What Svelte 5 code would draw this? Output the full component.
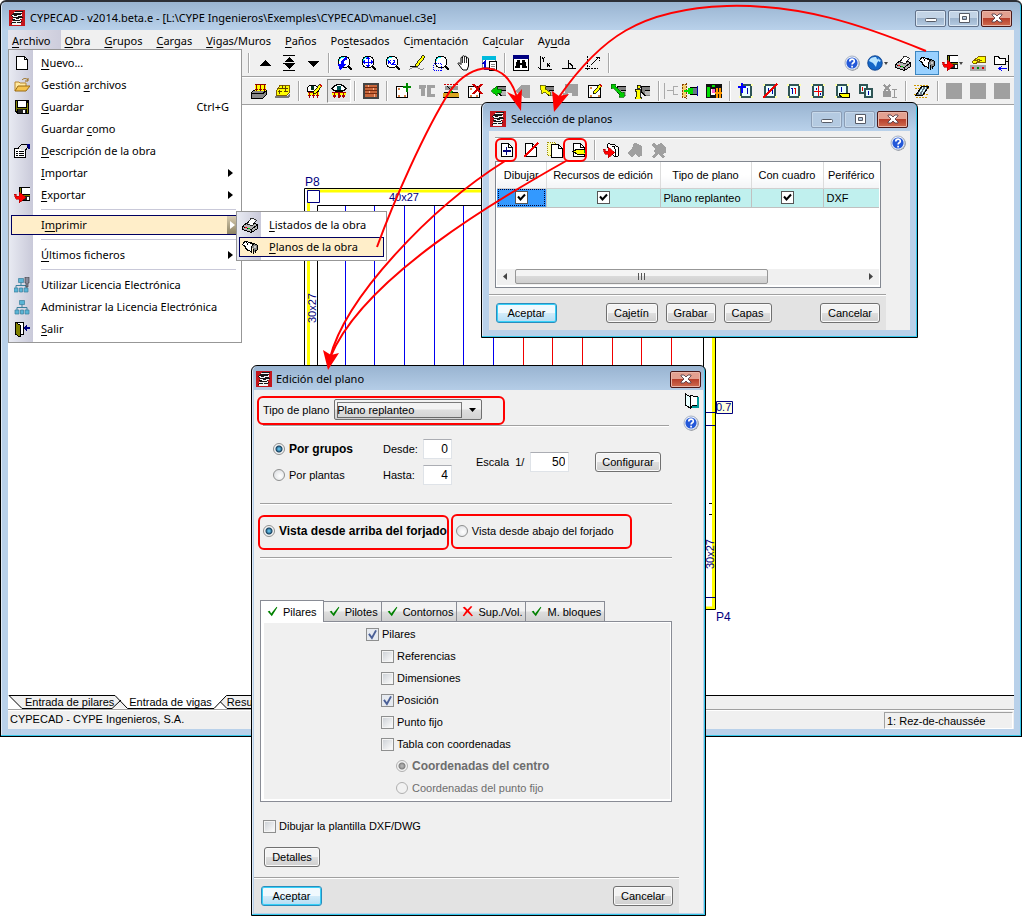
<script>
  const blk = 'stroke="#000" fill="none"';
  const floppy = '<path d="M1 1h14v14H3l-2-2z" fill="#000"/><path d="M4 2h8v6H4z" fill="#fff"/><path d="M2 2h1v10h-1zM13 4h1v10h-1zM3 9h10v1H3z" fill="#808000"/><path d="M4 10h8v4H4z" fill="#222"/><path d="M9 11h2v3H9z" fill="#fff"/>';
  const redArrow = '<path d="M0 7h2v2h3V5l7 5.500-7 5.500v-4H2z" fill="#f00" stroke="#a00" stroke-width=".6"/>';
  const lens = '<path d="M11 11l4 4" stroke="#000" stroke-width="2.500"/><circle cx="7" cy="7" r="6" fill="#fff" stroke="#000"/><path d="M2.500 6a4 4 0 0 1 4-4" stroke="#0ff" fill="none"/>';
  const pencil = '<path d="M13 1l2 2-6 7-3 1 1-3z" fill="#ff0" stroke="#000" stroke-width=".8"/><path d="M13 1l2 2-1 1-2-2z" fill="#c00"/>';
  const column = (inner) => `<path d="M2 1h12v14H2z" fill="#2f5555"/><path d="M4 3h8v10H4z" fill="#e8ffff"/><path d="M1 1h2v2H1zM13 1h2v2h-2zM1 13h2v2H1zM13 13h2v2h-2z" fill="#ffa"/>${inner}`;
  const beam = '<path d="M6 3h9v10H10L6 9z" fill="#808080"/><path d="M6 3.500h9M6.500 3v6l4 4M10 7.500h5" stroke="#000" fill="none"/><path d="M10 8h5v4h-5z" fill="#b8b8b8"/>';
  const nodes = '<path d="M8 5v3M3 11V8.500h10V11" stroke="#3b7f9c" fill="none"/><path d="M5.500 1.500h5v4h-5zM1 11h4v4H1zM6.500 11h3v4h-3zM11 11h4v4h-4z" fill="#5ab4d6" stroke="#3b7f9c" stroke-width=".7"/>';
  const page = '<path d="M2.500 1.500h7l4 4v9h-11z" fill="#fff" stroke="#000"/><path d="M9.500 1.500v4h4" stroke="#000" fill="none"/>';

  const icons = {
    logo: '<path d="M0 0h16v16H0z" fill="#c4161c"/><path d="M4 2l3-1h7l-1 3-2 2 3 1-1 2-2 1 2 1-1 3-3 1H3l-1-2 2-2-1-2 2-1-3-2 1-2 2-1z" fill="#161616"/><path d="M5 2.500h8M3 5.500l3 1 7-1.500M4 8.500l5 1 4-1.500M3 11.500l5 .5 4-1M3 14h9" stroke="#f4f4f4" stroke-width="1.200" fill="none"/>',
    blank: '<path d="M2.500 1.500h8l3 3v10h-11z" fill="#fff" stroke="#000"/><path d="M10.500 1.500v3h3" stroke="#000" fill="none"/>',
    open: '<path d="M1 14V5h4l1 1h6v3" fill="#ffe9a0" stroke="#b8862c"/><path d="M1 14l3-5h12l-4 5z" fill="#f5c34d" stroke="#9a6b14"/><path d="M8 3c2-2 4-2 6 0m0-2v3h-3" stroke="#9a6b14" fill="none"/>',
    save: floppy,
    props: `<path d="M.5 5.500h11v9H.5z" fill="#fff" stroke="#000"/><path d="M2 8.500h2m1 0h5M2 10.500h2m1 0h5M2 12.500h2m1 0h5" ${blk}/><path d="M4 5l4-4h5v4l-2 3" fill="#ddd" stroke="#000"/><path d="M13 1h3v5h-2z" fill="#000080"/>`,
    export: `<g transform="translate(4 -1)">${floppy}</g>${redArrow}`,
    printer: '<path d="M.5 9.500l6-5 9 3v4l-6 4-9-3z" fill="#b4b4b4" stroke="#000"/><path d="M.5 9.500l9 3 6-5M9.500 12.500v3" stroke="#000" fill="none"/><path d="M5 7l4-6 5 1.500-4 6z" fill="#fff" stroke="#000" stroke-width=".8"/><path d="M3 10h2v1H3z" fill="#f00"/><path d="M6 11h2v1H6z" fill="#0c0"/>',
    plotter: '<path d="M8 3l7 3v5l-2 1v2m-2-4v5m-2-5v4" fill="#888" stroke="#000"/><path d="M.8 6c0-3 3-4 4-3.500l6.500 3C9.500 6.500 9 9 9.300 12.500l-5-2C3.800 7.500 2.500 6.500.8 6z" fill="#fff" stroke="#000"/><path d="M4 3.500c1.500.5 2 1.500 2 2.500" stroke="#000" fill="none"/><path d="M12 7h2v2h-2z" fill="#ccc"/>',
    netkey: `<g transform="translate(-1 0)">${nodes}</g><path d="M11 0h4v6h-1v4h-2V6h-1z" fill="#889" stroke="#333" stroke-width=".6"/>`,
    net: nodes,
    exit: '<path d="M1 1.500h8.500v12H7" fill="#fff" stroke="#000"/><path d="M1 1l5 3v12l-5-3z" fill="#808000" stroke="#000"/><path d="M16 6h-3V3l-4 4 4 4V8h3z" fill="#000080"/>',
    up: '<path d="M2 11h12L8 5z" fill="#000"/>',
    updown: '<path d="M2 .5h12M2 15.500h12M2 8h12" stroke="#000"/><path d="M3 7h10L8 2zM3 9h10l-5 5z" fill="#000"/>',
    down: '<path d="M2 6h12l-6 6z" fill="#000"/>',
    zoomprev: `${lens}<path d="M3 15L1 9h3c0-4 3-7 6-7v3C7 5 7 8 7 9h2z" fill="#00f"/>`,
    zoomall: `${lens}<path d="M7 2v10M2 7h10M5.500 4L7 2.500 8.500 4M5.500 10L7 11.500 8.500 10M4 5.500L2.500 7 4 8.500M10 5.500L11.500 7 10 8.500" stroke="#00f" fill="none"/>`,
    zoom2: `${lens}<path d="M3 5l3 4m0-4l-3 4M7.500 5.500h2v1.500l-2 2h3" stroke="#00f" fill="none"/>`,
    sketch: '<path d="M0 14.500c5-3 8-3 10-1s3 1 5 0" stroke="#888" fill="none"/><path d="M14 0l2 2-7 9-3 1 1-3z" fill="#ff0" stroke="#000" stroke-width=".8"/><path d="M1 11.500h6" stroke="#000"/>',
    zoomrect: `<g transform="translate(1 0)">${lens}</g><path d="M.5 8.500h8v7h-8z" fill="none" stroke="#00f" stroke-dasharray="1 1"/>`,
    hand: '<path d="M5 14L1 8.500c0-1 1.500-1 3 1V3c0-1 1.500-1 1.500 0V1.500c0-1 2-1 2 0V2c0-1 2-1 2 0v1.500c0-1 2-1 2 0V11l-1.500 4H6z" fill="#fff" stroke="#000"/><path d="M5.500 3v5M7.500 2v6M9.500 3v5" stroke="#000" stroke-width=".8"/>',
    winprev: '<path d="M1.500 1.500h13v11h-13z" fill="#fff" stroke="#888"/><path d="M1 1h14v4H1z" fill="#0bd"/><path d="M8.500 6.500h7v9h-7z" fill="#fff" stroke="#000"/><path d="M10 9.500h4m-4 2h4m-4 2h4" stroke="#888"/><path d="M5 6v7h3v2H3V9H1l3-4z" fill="#00c"/>',
    binoc: '<path d="M0 0h16v16H0z" fill="#000"/><path d="M0 0h16v4H0z" fill="#000080"/><path d="M1 4h14v11H1z" fill="#fff"/><path d="M4 5h3v3h2V5h3l2 8H9V10H7v3H2z" fill="#000"/>',
    axes: `<path d="M3.500 1v13H15M1.500 12.500l4 3" ${blk}/><path d="M5 2l1.500 2L8 2M6.500 4v3M10 8l3 4m0-4l-3 4" ${blk}/>`,
    perp: `<path d="M1 13.500h14M7.500 5v8M7.500 8.500c3 0 4 2 4 4" ${blk}/>`,
    dots: `<path d="M2.500 1v14M0 13.500h13" ${blk} stroke-dasharray="2 1"/><path d="M4 12l10-10M11 2.500h3.500V6" ${blk} stroke-dasharray="2 1"/>`,
    help: '<circle cx="8.500" cy="8.500" r="7.200" fill="#777"/><circle cx="8" cy="8" r="7" fill="#eef3fb" stroke="#a9b4c8"/><circle cx="8" cy="8" r="5.600" fill="#2458d8"/><path d="M5.800 6.500c0-3 4.500-3 4.500-.3 0 1.600-2.200 1.600-2.200 3.300M8.100 10.800v1.600" stroke="#fff" stroke-width="1.700" fill="none"/>',
    globe: '<circle cx="8" cy="8" r="7.300" fill="#1467c8" stroke="#0a3c86" stroke-width=".8"/><path d="M3 4c2-2 5-2 6-2l1 2 2 1-2 3-1 4-3-4-4-2zM11 3l3 3-2 1z" fill="#b8e4ff"/>',
    tool: '<path d="M2 7l6-5 7-1 1 6H9L4 9z" fill="#ff0" stroke="#806000"/><path d="M5 6l5-2M7 7l5-2" stroke="#806000"/><path d="M0 10h16v6H0z" fill="#aaa"/><path d="M2 12h2v2H2z" fill="#d00"/><path d="M7 12h2v2H7z" fill="#080"/><path d="M12 12h2v2h-2z" fill="#d00"/>',
    folderback: `<path d="M.5 9.500v-8h4l1 2h6v6zM14.500 0v16M11 6.500h4" fill="#fff" stroke="#000"/><path d="M13 13.500H5m3-2.500l-3 2.500L8 16" stroke="#00f" fill="none"/>`,
    slabA: '<path d="M0 10l3-3h12v5l-3 3H0z" fill="#8a8a8a" stroke="#000"/><path d="M0 10.500h12l3-3" stroke="#000" fill="none"/><path d="M4 1h11v7H4z" fill="#ff0"/><path d="M4 1.500h11M5.500 1v7M9.500 1v7M13.500 1v7M4 6.500h3m1 0h3m1 0h3" stroke="#900000"/>',
    slabB: '<path d="M1 9l4-7h9v8l-2 2H1z" fill="#ff0" stroke="#806000"/><path d="M4 5.500h9M3 8.500h4m2 0h4M7.500 2v4M10.500 3v6M4.500 7v4" stroke="#604000"/><path d="M0 13h12l3-3v3l-2 2H0z" fill="#777"/>',
    eyeedit: `<path d="M0 5c3-4 8-4 11 0v3H0z" fill="#fff" stroke="#000"/><circle cx="5.500" cy="5" r="2" fill="#032"/><path d="M1 9h11v3H1z" fill="#ff0"/><path d="M1 9.500h10M2.500 9v6M6.500 9v6M10.500 9v6M1 12.500h3m1 0h3m1 0h3" stroke="#a00" fill="none"/>${pencil}`,
    eye: '<path d="M1 9h14v3H1z" fill="#ff0"/><path d="M1 9.500h14M3.500 9v6M8 9v6M12.500 9v6M2 13h3m1.500 0h3M11 13h3" stroke="#a00" stroke-width="1.200"/><path d="M1 6c3-6 11-6 14 0-3 3-11 3-14 0z" fill="#fff" stroke="#000" stroke-width="1.400"/><circle cx="8" cy="5" r="2.500" fill="#055"/>',
    bricks: '<path d="M1 1h14v14H1z" fill="#c8663a" stroke="#444" stroke-width="2"/><path d="M2 4.500h12M2 7.500h12M2 10.500h12" stroke="#7a2c10" stroke-width="1"/><path d="M5 2v2M10 5v2M6 8v2M11 11v3" stroke="#f0b090"/>',
    addbox: '<path d="M1.500 3.500h11v11h-11z" fill="#fff" stroke="#000"/><path d="M3 5h2v2H3zM9 12h2v2H9zM3 12h2v2H3z" fill="#d8834a"/><path d="M12 0v9M8 4h8" stroke="#080" stroke-width="2"/>',
    grayA: '<path d="M0 2h7v3H6v8H2V6H0zM8 2h8v3h-4v6h4v3H8z" fill="#a0a0a0"/>',
    layers: '<path d="M2 3h13v4H2z" fill="#999"/><path d="M1 1.500h14" stroke="#c00" stroke-dasharray="2 1"/><path d="M0 10h16v4H0z" fill="#d9a520"/><path d="M1 9.500h14M0 14.500h16M4 3l7 7" stroke="#000"/><path d="M8 4v6M6 8l2 2 2-2" stroke="#0a0" fill="none"/>',
    delbox: '<path d="M1.500 3.500h11v11h-11z" fill="#fff" stroke="#000"/><path d="M3 12h2v2H3zM3 5h2v2H3zM9 12h2v2H9z" fill="#d8834a"/><path d="M6 1l9 10M15 1L6 11" stroke="#c00" stroke-width="2.200"/>',
    beamleft: `${beam}<path d="M0 8l6-5v3h4v4H6v3z" fill="#0c0" stroke="#060" stroke-width=".7"/>`,
    grayB: '<path d="M0 8l6-6h9v13H9L6 12z" fill="#a0a0a0"/>',
    beamy: `${beam}<path d="M1 2l6 1-1 3 6 4-1 3-6-4-2 2z" fill="#ff0" stroke="#550" stroke-width=".8"/>`,
    grayC: '<path d="M2 1h13v12H9v-3H5v3H0v-3h2z" fill="#a0a0a0"/>',
    editbox: `<path d="M1.500 2.500h12v12h-12z" fill="#fff" stroke="#000"/><path d="M3 4h2v2H3zM3 12h2v2H3zM11 12h2v2h-2z" fill="#d8834a"/>${pencil}`,
    beamdiag: `${beam}<path d="M0 1h5L4 3l7 7 2-1v5H8l1-2-7-7-2 1z" fill="#0c0" stroke="#060" stroke-width=".7"/>`,
    info: `${beam}<path d="M1 6h4v8h1v2H0v-2h1V8H0V6zM2 2h3v3H2z" fill="#ff0" stroke="#000" stroke-width=".8"/>`,
    grayC2: '<path d="M1.500 0v16M15 3.500h-5v8h5M10 7.500H4" stroke="#aaa" fill="none"/>',
    joint: '<path d="M0 2l4-1v14l-4-1z" fill="#f5d070" stroke="#840" stroke-dasharray="2 1"/><path d="M8 4h7v8H8z" fill="#678"/><path d="M8 4.500h7M8 11.500h7" stroke="#000"/><path d="M2 7h4V5h5v6H6V9H2z" fill="#0d0"/><path d="M15 3v10" stroke="#00a"/>',
    beams2: '<path d="M0 1h16v14H0z" fill="#111"/><path d="M1 4h3v10H1zM6 2h3v2H6z" fill="#0d0"/><path d="M10 5h2v10h-2zM13 5h2v10h-2zM9 9h7v2H9z" fill="#f90"/><path d="M5 6h4v6H5z" fill="#fff"/><path d="M6 6h3v4H6z" fill="#f6c"/>',
    colAdd: column('<path d="M9.500 5v6" stroke="#00a" fill="none"/><path d="M4 0v10M0 4h8" stroke="#00f" stroke-width="2"/>'),
    colDel: column('<path d="M6.500 5v6m4-6v6" stroke="#00a"/><path d="M1 15L15 1" stroke="#e00" stroke-width="2.500"/>'),
    colTwo: column('<path d="M5 5.500h1.500V11" stroke="#00a" fill="none"/><path d="M8 5.500h1.500V11" stroke="#e00" fill="none"/>'),
    colCross: column('<path d="M8.500 3v10M4 8.500h8" stroke="#e00"/><path d="M6 5h1v2H6zM10 10h1v2h-1z" fill="#00a"/>'),
    colPen: column('<path d="M7.500 4v5" stroke="#00a"/><path d="M6 10h9v4H8l-3-2z" fill="#ff0" stroke="#000"/>'),
    colPair: '<path d="M1 1h9v10H1z" fill="#2f5555"/><path d="M3 3h5v6H3z" fill="#e8ffff"/><path d="M6 5h9v10H6z" fill="#2f5555"/><path d="M8 7h5v6H8z" fill="#e8ffff"/><path d="M4.500 4v4" stroke="#e00"/><path d="M10.500 8v4" stroke="#00a"/>',
    grayD: '<path d="M2 2l6 6m0-6L2 8" stroke="#999" stroke-width="2" fill="none"/><path d="M1 8h8v6H1z" fill="#999"/><path d="M10 6.500h5m-2.500 0v8M10 14.500h5" stroke="#999" fill="none"/>',
    hatch: '<path d="M0 2.500h15M1 5.500h14M0 11.500h15M2 14.500h12" stroke="#c90" stroke-dasharray="2 1"/><path d="M2 12l6-9h7l-6 9z" fill="#678" stroke="#000"/><path d="M5 11l4-7M8 11l4-7" stroke="#dff"/>',
    gray: '<path d="M0 0h16v16H0z" fill="#a0a0a0"/>',
    pageadd: `${page}<path d="M7.500 5v8M3.500 9h8" stroke="#000080" stroke-width="1.500"/>`,
    pagedel: `${page}<path d="M1 15L15 1" stroke="#e00" stroke-width="2.500"/>`,
    pagecopy: '<path d="M.5.500h7l2 2v11h-9z" fill="#ffffa8" stroke="#a09000" stroke-dasharray="1 1"/><path d="M4.500 2.500h7l4 4v9h-11z" fill="#fff" stroke="#000"/><path d="M11.500 2.500v4h4" stroke="#000" fill="none"/>',
    pageedit: `${page}<path d="M6 7h9v5H6L2 9.500z" fill="#ff0" stroke="#000"/><path d="M13 8h1v3h-1z" fill="#0a0"/>`,
    planout: `<path d="M4 4c0-3 3-3 4-1l2-1 5 3v9l-3 1-5-5z" fill="#fff" stroke="#000"/><path d="M9 5c2-1 3 0 3 2v8" stroke="#000" fill="none"/>${redArrow}`,
    planA: '<path d="M6 3c2-3 3-2 5-1l4 2v10l-4 1-2-3-4 3-5-4 5-4z" fill="#a0a0a0"/>',
    planB: '<path d="M0 3l3-2 3 2 4-2 5 4v6l-4 1 3 3-3 1-4-4-4 4-3-1 4-4-2-2 2-2z" fill="#a0a0a0"/>',
    check: '<path d="M1 8l3-1 2 4L14 1l1 1-8 13z" fill="#008000"/>',
    cross: '<path d="M1 2l3-1 4 4 5-5 2 1-5 6 6 7-2 1-6-6-5 6-2-1 5-7z" fill="#f00"/>',
    book: '<path d="M3 5l4 3V2l3 1h4v9h-4l-2 3-5-4z" fill="#fff" stroke="#000"/><path d="M2.500 1v11l5 3.500V4z" fill="#e8ffff" stroke="#000"/><path d="M15 4v10H9" stroke="#099" stroke-width="1.500" fill="none"/>'
  };
  const smooth = ['help', 'globe', 'open', 'hand', 'check', 'cross', 'net', 'netkey'];

  const menus = ['_Archivo', '_Obra', '_Grupos', '_Cargas', '_Vigas/Muros', '_Paños', 'Po_stesados', 'C_imentación', 'Ca_lcular', 'Ay_uda'];
  const viewTools = [['up', 'updown', 'down'], ['zoomprev', 'zoomall', 'zoom2', 'sketch', 'zoomrect', 'hand', 'winprev'], ['binoc', 'axes', 'perp', 'dots'], []];
  const fileTools = [
    { i: 'help' }, { i: 'globe', caret: true }, { i: 'printer' }, { i: 'plotter', hot: true },
    { i: 'export', caret: true }, { i: 'tool' }, { i: 'folderback' }
  ];
  const editTools = [
    ['slabA', 'slabB'], ['eyeedit', 'eye'], ['bricks'],
    ['addbox', 'grayA', 'layers', 'delbox', 'beamleft', 'grayB', 'beamy', 'grayC', 'editbox', 'beamdiag', 'info'],
    ['grayC2', 'joint', 'beams2'],
    ['colAdd', 'colDel', 'colTwo', 'colCross', 'colPen', 'colPair', 'grayD'], ['hatch'], ['gray', 'gray', 'gray']
  ];
  const fileMenu = [
    { t: '_Nuevo...', i: 'blank' }, { t: 'Gestión _archivos', i: 'open' }, { t: '_Guardar', i: 'save', key: 'Ctrl+G' },
    { t: 'Guardar _como' }, { t: '_Descripción de la obra', i: 'props' }, { t: '_Importar', sub: true },
    { t: '_Exportar', i: 'export', sub: true }, null, { t: 'I_mprimir', sub: true, hot: true }, null,
    { t: '_Últimos ficheros', sub: true }, null,
    { t: 'Utilizar Licencia Electrónica', i: 'netkey' }, { t: 'Administrar la Licencia Electrónica', i: 'net' }, { t: '_Salir', i: 'exit' }
  ];
  const printMenu = [{ t: '_Listados de la obra', i: 'printer' }, { t: '_Planos de la obra', i: 'plotter', hot: true }];
  const planTabs = [
    { t: 'Pilares', i: 'check' }, { t: 'Pilotes', i: 'check' }, { t: 'Contornos', i: 'check' },
    { t: 'Sup./Vol.', i: 'cross' }, { t: 'M. bloques', i: 'check' }
  ];
  const options = [
    { t: 'Pilares', on: true, level: 0 }, { t: 'Referencias', level: 1 }, { t: 'Dimensiones', level: 1 },
    { t: 'Posición', on: true, level: 1 }, { t: 'Punto fijo', level: 1 }, { t: 'Tabla con coordenadas', level: 1 }
  ];
  const blueJoists = [345.5, 374.5, 404.5, 434.5, 463.5, 493.5];
  const redJoists = [523.5, 552.5, 582.5, 612.5, 641.5, 671.5];

  function split(text) {
    const at = text.indexOf('_');
    return at < 0 ? [text, '', ''] : [text.slice(0, at), text[at + 1], text.slice(at + 2)];
  }
</script>

{#snippet icon(name, size = 16)}
  <svg class="icon" class:crisp={!smooth.includes(name)} width={size} height={size} viewBox="0 0 16 16" aria-hidden="true">{@html icons[name]}</svg>
{/snippet}

{#snippet mnemonic(text)}
  {@const p = split(text)}
  <span>{p[0]}{#if p[1]}<u>{p[1]}</u>{/if}{p[2]}</span>
{/snippet}

{#snippet winButtons(all)}
  <div class="winbtns">
    {#if all}
      <button class="winbtn" aria-label="Minimizar"><svg width="14" height="12"><rect x="1.500" y="6.500" width="11" height="3" rx="1" fill="#fff" stroke="#565b66" /></svg></button>
      <button class="winbtn" aria-label="Maximizar"><svg width="14" height="12"><path d="M2.500 1.500h10v9h-10zM5.500 4.500h4v3h-4z" fill="#fff" fill-rule="evenodd" stroke="#565b66" /></svg></button>
    {/if}
    <button class="winbtn close" aria-label="Cerrar"><svg width="14" height="12"><path d="M2 2h3l2 2 2-2h3v1L9 6l3 3v1H9L7 8l-2 2H2V9l3-3-3-3z" fill="#fff" stroke="#5a4048" stroke-width=".9" /></svg></button>
  </div>
{/snippet}

{#snippet popup(items, kind)}
  <ul class="popup {kind}">
    {#each items as it}
      {#if it}
        <li>
          <button class="item" class:hot={it.hot}>
            <span class="slot">{#if it.i}{@render icon(it.i)}{/if}</span>
            {@render mnemonic(it.t)}
            {#if it.key}<span class="key">{it.key}</span>{/if}
            {#if it.sub}<span class="arrow"><svg width="5" height="8"><path d="M0 0l5 4-5 4z" fill="currentColor" /></svg></span>{/if}
          </button>
        </li>
      {:else}
        <li class="rule"></li>
      {/if}
    {/each}
  </ul>
{/snippet}

<div class="desktop">
  <main class="window app">
    <header class="title">{@render icon('logo')}<span>CYPECAD - v2014.beta.e - [L:\CYPE Ingenieros\Exemples\CYPECAD\manuel.c3e]</span>{@render winButtons(true)}</header>
    <div class="content">
      <nav class="menubar">
        {#each menus as m, n}<button class:open={n === 0}>{@render mnemonic(m)}</button>{/each}
      </nav>
      <div class="toolbar">
        {#each viewTools as group}
          <i class="sep"></i>
          {#each group as name}<button class="tool" aria-label={name}>{@render icon(name)}</button>{/each}
        {/each}
        <div class="right">
          {#each fileTools as f}
            <button class="tool" class:hot={f.hot} class:wide={f.caret} aria-label={f.i}>{@render icon(f.i)}{#if f.caret}<i class="caret"></i>{/if}</button>
          {/each}
        </div>
      </div>
      <div class="toolbar edit">
        {#each editTools as group, n}
          {#if n}<i class="sep"></i>{/if}
          {#each group as name}<button class="tool" class:pressed={name === 'eye'} class:slim={name === 'grayC2'} aria-label={name}>{@render icon(name)}</button>{/each}
        {/each}
      </div>
      <div class="canvas">
        <svg width="1006" height="590" viewBox="8 105 1006 590">
          <path d="M308.500 609V191H713.500V608H308" fill="none" stroke="#ff0" stroke-width="3" />
          <path d="M304.500 609.500V188.500H715.500V609.500z" fill="none" stroke="#000" />
          <path d="M317.500 600V205.500H703.500V600" fill="none" stroke="#000" />
          {#each blueJoists as x}<path d="M{x} 206V600" stroke="#0000f0" />{/each}
          {#each redJoists as x}<path d="M{x} 206V600" stroke="#f00000" />{/each}
          <path d="M307.500 190.500h12v12h-12z" fill="#fff" stroke="#000080" />
          <path d="M704 412.500h11M704 425.500h11M704 597.500h11" stroke="#000080" />
          <path d="M709 503.500h3M709 514.500h3" stroke="#000" />
          <path d="M716.500 401.500h16v12h-16z" fill="#ffffe0" stroke="#000080" />
          <g class="cad">
            <text x="716" y="411">0.7</text>
            <text x="305" y="186" class="big">P8</text>
            <text x="716" y="621" class="big">P4</text>
            <text x="389" y="201">40x27</text>
            <text transform="translate(316 323) rotate(-90)">30x27</text>
            <text transform="translate(714 569) rotate(-90)">30x27</text>
          </g>
        </svg>
      </div>
      <div class="sheets">
        <svg width="320" height="14" aria-hidden="true">
          <path d="M1 .5H107L119 13.500H14z" fill="#f0f0f0" />
          <path d="M218 .5H320V13.500H219L212 6.500z" fill="#f0f0f0" />
          <path d="M1 .5H107L119.500 13.500H206L218.500.5H320M1 .5L14 13.500H104L113 5M212.500 7L219 13.500H320" fill="none" stroke="#000" />
        </svg>
        <button>Entrada de pilares</button><button>Entrada de vigas</button><button>Resultados</button>
      </div>
      <footer class="status"><span>CYPECAD - CYPE Ingenieros, S.A.</span><span class="cell">1: Rez-de-chaussée</span></footer>
    </div>
  </main>

  {@render popup(fileMenu, 'file')}
  {@render popup(printMenu, 'print')}

  <section class="window dialog plans">
    <header class="title">{@render icon('logo')}<span>Selección de planos</span>{@render winButtons(true)}</header>
    <div class="content split">
      <div class="pane">
        <div class="inner">
          <hr />
          <div class="tools">
            {#each ['pageadd', 'pagedel', 'pagecopy', 'pageedit'] as name}<button class="tool" aria-label={name}>{@render icon(name)}</button>{/each}
            <i class="sep"></i>
            {#each ['planout', 'planA', 'planB'] as name}<button class="tool" aria-label={name}>{@render icon(name)}</button>{/each}
          </div>
          <div class="list">
            <table>
              <colgroup><col class="c1" /><col class="c2" /><col class="c3" /><col class="c4" /><col class="c5" /></colgroup>
              <thead><tr><th>Dibujar</th><th>Recursos de edición</th><th>Tipo de plano</th><th>Con cuadro</th><th>Periférico</th></tr></thead>
              <tbody>
                <tr>
                  <td class="mid sel"><input type="checkbox" class="flat" checked aria-label="Dibujar" /></td>
                  <td class="mid"><input type="checkbox" class="flat" checked aria-label="Recursos de edición" /></td>
                  <td>Plano replanteo</td>
                  <td class="mid"><input type="checkbox" class="flat" checked aria-label="Con cuadro" /></td>
                  <td>DXF</td>
                </tr>
              </tbody>
            </table>
            <div class="scroll">
              <svg width="4" height="7"><path d="M4 0L0 3.500 4 7z" fill="#444" /></svg>
              <div class="track"><div class="thumb"><i></i><i></i><i></i></div></div>
              <svg width="4" height="7"><path d="M0 0l4 3.500L0 7z" fill="#444" /></svg>
            </div>
          </div>
        </div>
        <div class="actions">
          <button class="btn default">Aceptar</button>
          <div class="group"><button class="btn cj">Cajetín</button><button class="btn gr">Grabar</button><button class="btn cp">Capas</button></div>
          <button class="btn ok">Cancelar</button>
        </div>
      </div>
      <aside><button class="tool" aria-label="Ayuda">{@render icon('help')}</button></aside>
    </div>
  </section>

  <section class="window dialog editor">
    <header class="title">{@render icon('logo')}<span>Edición del plano</span>{@render winButtons(false)}</header>
    <div class="content split">
      <div class="pane">
        <div class="inner">
          <div class="kind">
            <label for="kind">Tipo de plano</label>
            <select id="kind"><option>Plano replanteo</option></select>
          </div>
          <hr class="short" />
          <div class="scope">
            <div class="lines">
              <label><input type="radio" name="scope" checked /><b>Por grupos</b></label>
              <label><input type="radio" name="scope" />Por plantas</label>
            </div>
            <div class="lines range">
              <label><span>Desde:</span><input type="text" value="0" /></label>
              <label><span>Hasta:</span><input type="text" value="4" /></label>
            </div>
            <label class="scale"><span>Escala&nbsp; 1/</span><input type="text" value="50" /></label>
            <button class="btn cfg">Configurar</button>
          </div>
          <hr />
          <div class="view">
            <label><input type="radio" name="view" checked /><b>Vista desde arriba del forjado</b></label>
            <label><input type="radio" name="view" />Vista desde abajo del forjado</label>
          </div>
          <hr />
          <div class="tabs" role="tablist">
            {#each planTabs as t, n}
              <button role="tab" aria-selected={n === 0} class:active={n === 0}>{@render icon(t.i, 11)}<span>{t.t}</span></button>
            {/each}
          </div>
          <div class="panel">
            {#each options as o}
              <label class="opt" class:sub={o.level === 1}><input type="checkbox" checked={o.on} />{o.t}</label>
            {/each}
            <label class="opt deep"><input type="radio" name="coord" checked disabled /><b>Coordenadas del centro</b></label>
            <label class="opt deep"><input type="radio" name="coord" disabled />Coordenadas del punto fijo</label>
          </div>
          <label class="opt dxf"><input type="checkbox" />Dibujar la plantilla DXF/DWG</label>
          <button class="btn det">Detalles</button>
        </div>
        <div class="actions">
          <button class="btn default">Aceptar</button>
          <button class="btn ok">Cancelar</button>
        </div>
      </div>
      <aside>
        <button class="tool" aria-label="Manual">{@render icon('book')}</button>
        <button class="tool" aria-label="Ayuda">{@render icon('help')}</button>
      </aside>
    </div>
  </section>

  <svg class="notes" width="1022" height="917" viewBox="0 0 1022 917" aria-hidden="true">
    <g fill="none" stroke="#f00" stroke-width="2">
      <path d="M377 247C393 203 425 130 450 91C473 60 507 60 517 98" />
      <path d="M926 51C860 24 800 4 727 6C640 9 600 38 559 97" />
      <path d="M505 161C430 208 345 298 330 358" />
      <path d="M566 161C500 198 362 278 330 358" />
      <rect x="496" y="139" width="20" height="22" rx="5" />
      <rect x="564" y="139" width="22" height="22" rx="5" />
      <rect x="258" y="397" width="246" height="27" rx="5" />
      <rect x="259" y="516" width="189" height="33" rx="5" />
      <rect x="452" y="515" width="179" height="33" rx="5" />
    </g>
    <path d="M521 111L507 92L516 96L522 89zM554 112L552 91L559 96L569 94zM328 370L323 350L331 355L339 353z" fill="#f00" />
  </svg>
</div>

<style>
  :global(body) { background: #fff; }
  .desktop, .desktop * { box-sizing: border-box; }
  .desktop {
    position: relative;
    min-height: 100vh;
    overflow: hidden;
    font: 11px/14px "Liberation Sans", Arial, sans-serif;
    color: #000;
  }
  button { font: inherit; color: inherit; margin: 0; padding: 0; border: 0; background: none; }
  svg { display: block; flex: none; }
  .crisp { shape-rendering: crispEdges; }
  u { text-underline-offset: 2px; }

  .window {
    display: flex;
    flex-direction: column;
    border: 1px solid #000;
    background: linear-gradient(#99b4d1, #b9d1ea 28px);
    box-shadow: inset -1px -1px #35c7ea, inset 1px 0 #dfeaf6;
  }
  .app { height: calc(100vh - 180px); min-height: 560px; padding: 0 7px 7px; border-top: 2px solid #2c2f36; border-radius: 6px 6px 0 0; }
  .title {
    display: flex;
    align-items: center;
    gap: 5px;
    height: 28px;
    font: 11px/16px "Noto Sans", "Segoe UI", sans-serif;
    padding: 4px 2px 0 1px;
  }
  .winbtns { display: flex; gap: 2px; margin-left: auto; }
  .winbtn {
    display: flex; align-items: center; justify-content: center;
    width: 31px; height: 17px;
    border: 1px solid #62728a; border-radius: 2px;
    background: linear-gradient(#c3d4e6 45%, #9db4cd 50%, #b5cbe2);
    box-shadow: inset 0 0 0 1px #dbe7f3;
  }
  .plans .winbtn:not(.close) { border-color: #8b9db5; background: #b4cae1; box-shadow: inset 0 0 0 1px #c8d9ea; }
  .winbtn.close { border-color: #4a1818; background: linear-gradient(#e3a090 45%, #b8402c 50%, #cf6c50); box-shadow: inset 0 0 0 1px #e9b5a8; }
  .content { flex: 1; display: flex; flex-direction: column; min-height: 0; background: #f0f0f0; }

  .menubar { display: flex; height: 20px; font: 11px/19px "Noto Sans", "Segoe UI", sans-serif; }
  .menubar button { padding: 0 10px 0 4px; }
  .menubar .open { background: linear-gradient(90deg, #e6e6ee, #cdcddc); }
  .toolbar { display: flex; align-items: center; height: 27px; padding-left: 237px; border-bottom: 1px solid #a0a0a0; box-shadow: 0 1px #fff; overflow: hidden; }
  .toolbar.edit { height: 28px; padding-left: 239px; }
  .right { display: flex; margin-left: auto; }
  .sep { flex: none; width: 2px; height: 20px; margin: 0 3px; border-left: 1px solid #a8a8a8; border-right: 1px solid #fff; }
  .tool { flex: none; display: flex; align-items: center; justify-content: center; width: 24px; height: 24px; }
  .tool.wide { width: 27px; gap: 1px; }
  .tool.slim { width: 15px; overflow: hidden; }
  .tool.hot { background: #99d1ff; border: 1px solid #3c86c0; }
  .tool.pressed { background: #e4e4e4; border: 1px solid; border-color: #888 #fff #fff #888; }
  .caret { border: 2px solid transparent; border-top: 3px solid #444; border-bottom: 0; }

  .canvas { flex: 1; min-height: 0; overflow: hidden; background: #fff; }
  .cad { font-size: 11px; fill: #000080; }
  .cad .big { font-size: 12px; }

  .sheets { position: relative; display: flex; height: 14px; padding-left: 3px; background: linear-gradient(#000 1px, #f0f0f0 1px); line-height: 14px; }
  .sheets svg { position: absolute; left: 0; top: 0; background: #fff; }
  .sheets button { position: relative; padding: 0 1px 0 14px; }
  .status { display: flex; justify-content: space-between; height: 20px; border-top: 1px solid #a0a0a0; box-shadow: inset 0 1px #fff; line-height: 19px; padding: 0 1px 0 2px; }
  .status .cell { width: 129px; height: 17px; margin-top: 2px; padding-left: 2px; line-height: 16px; border: 1px solid; border-color: #a0a0a0 #fff #fff #a0a0a0; }

  .popup {
    position: absolute; margin: 0; padding: 2px; list-style: none;
    font: 11px/20px "Noto Sans", "Segoe UI", sans-serif;
    background: linear-gradient(90deg, #e8eaf2, #c9c9d9 24px, #fff 24px);
    border: 1px solid #979797;
  }
  .popup.file { left: 8px; top: 49px; width: 234px; }
  .popup.print { left: 236px; top: 211px; width: 151px; }
  .item { display: flex; align-items: center; width: 100%; height: 22px; }
  .item.hot { height: 20px; margin: 1px 0; border: 1px solid #000060; background: #ffeec9; }
  .slot { width: 22px; margin-right: 8px; padding-left: 3px; }
  .item.hot .slot { width: 21px; padding-left: 2px; }
  .key { margin-left: auto; margin-right: 10px; }
  .arrow { margin-left: auto; padding-right: 6px; }
  .item.hot .arrow { display: flex; align-items: center; width: 11px; height: 18px; padding: 0 3px; background: linear-gradient(#d8ccb0, #8c8264); color: #fff; }
  .rule { height: 8px; padding: 3px 3px 0 30px; }
  .rule::before { content: ""; display: block; height: 1px; background: #c9c9d9; }

  .dialog { position: absolute; border-radius: 6px 6px 0 0; }
  .plans { left: 481px; top: 102px; width: 437px; padding: 0 7px 7px; }
  .editor { left: 251px; top: 365px; width: 455px; padding: 0 2px 2px; }
  .editor .title { height: 24px; padding: 2px 2px 0; gap: 4px; }
  .split { flex-direction: row; }
  .pane { flex: 1; display: flex; flex-direction: column; min-width: 0; }
  aside { width: 24px; display: flex; flex-direction: column; align-items: center; }
  .editor aside .tool { height: 22px; }
  hr { margin: 0; border: 0; height: 2px; background: #a0a0a0; border-bottom: 1px solid #fff; }
  .plans .inner { padding: 6px 5px 6px 6px; }
  .tools { display: flex; align-items: center; height: 22px; }
  .list { border: 1px solid #828790; background: #fff; padding: 0 1px 2px; }
  table { width: 100%; border-collapse: collapse; table-layout: fixed; }
  .c1 { width: 49px; } .c2 { width: 114px; } .c3 { width: 91px; } .c4 { width: 72px; }
  th { height: 26px; padding: 0; font-weight: normal; text-align: center; background: linear-gradient(#fff 50%, #f3f4f6); border-right: 1px solid #dcdcdc; border-bottom: 1px solid #d0d0d0; white-space: nowrap; }
  td { height: 19px; padding: 0 3px; background: #c0f0ee; border-right: 1px solid #c0c0c0; border-bottom: 1px solid #c0c0c0; white-space: nowrap; }
  th:last-child, td:last-child { border-right: 0; }
  td.mid { text-align: center; line-height: 0; }
  td.sel { background: #3399ff; outline: 1px dotted #003; outline-offset: -2px; }
  .scroll { display: flex; align-items: center; height: 16px; margin-top: 61px; padding: 0 6px; background: #f0f0f0; }
  .track { flex: 1; padding: 0 8px; }
  .thumb { display: flex; justify-content: center; align-items: center; gap: 2px; width: 73%; height: 15px; border: 1px solid #979797; border-radius: 2px; background: linear-gradient(#f4f4f4 45%, #dadada 50%, #cfcfcf); }
  .thumb i { width: 1px; height: 7px; background: #555; }

  .actions { display: flex; justify-content: space-between; border-top: 1px solid #a0a0a0; background: #e3e3e3; box-shadow: inset 0 1px #fff; padding: 8px 6px 7px 7px; margin-top: auto; }
  .group { display: flex; gap: 8px; }
  .btn { height: 20px; border: 1px solid #707070; border-radius: 3px; background: linear-gradient(#f3f3f3 48%, #dedede 52%, #cfcfcf); box-shadow: inset 0 0 0 1px #fafafa; line-height: 18px; text-align: center; }
  .btn.default { width: 61px; border-color: #2a8dbd; background: linear-gradient(#f0f9fe 48%, #d2ebf9 52%, #b4ddf4); box-shadow: inset 0 0 0 1px #35d0f8; }
  .ok { width: 60px; } .cj { width: 52px; } .gr { width: 50px; } .cp { width: 48px; } .cfg { width: 66px; } .det { display: block; width: 56px; margin: 10px 0 10px 4px; }

  label { display: flex; align-items: center; white-space: nowrap; }
  b { font-size: 12px; }
  input { flex: none; margin: 0; appearance: none; }
  input[type="checkbox"] { width: 13px; height: 13px; margin-right: 3px; border: 1px solid #8e8f8f; background: linear-gradient(135deg, #cfd3d8, #fafafa) content-box, #f4f4f4; padding: 1px; }
  input[type="checkbox"]:checked { background: url("data:image/svg+xml,%3Csvg xmlns='http://www.w3.org/2000/svg' viewBox='0 0 11 11'%3E%3Cpath d='M2.500 5l2.500 3.500L8.500 2' fill='none' stroke='%234a5f97' stroke-width='1.600'/%3E%3C/svg%3E") border-box, #e6eaf0; }
  input.flat[type="checkbox"] { margin: 0; width: 11px; height: 11px; border: 0; background: url("data:image/svg+xml,%3Csvg xmlns='http://www.w3.org/2000/svg' viewBox='0 0 11 11'%3E%3Cpath d='M2 4.500l2.500 3L9 2.500' fill='none' stroke='%23000' stroke-width='2'/%3E%3C/svg%3E") border-box, #fff; outline: 1px solid #555; }
  input[type="radio"] { width: 12px; height: 12px; margin-right: 4px; border: 1px solid #8e8f8f; border-radius: 50%; background: radial-gradient(circle at 60% 60%, #fff, #d5d8dc); }
  input[type="radio"]:checked { background: radial-gradient(circle, #5fb7e0 0 1px, #16405f 3px, #f4f4f4 4px); }
  input[type="radio"]:disabled { border-color: #b0b0b0; background: #f2f2f2; }
  input[type="radio"]:disabled:checked { background: radial-gradient(circle, #b0b0b0 0 1px, #808080 3px, #f4f4f4 4px); }
  label:has(input:disabled) { color: #6d6d6d; }
  input[type="text"] { height: 20px; padding: 0 3px; font: inherit; font-size: 12px; text-align: right; border: 1px solid #dfe3e8; border-top-color: #abadb3; background: #fff; }

  .editor .inner { padding: 9px 7px 0 6px; }
  .kind { display: flex; align-items: center; gap: 5px; padding: 0 3px 5px; }
  select {
    width: 148px; height: 21px; padding: 0; font: inherit; color: inherit; appearance: none;
    border: 1px solid #707070; border-radius: 2px; text-indent: 2px;
    background:
      url("data:image/svg+xml,%3Csvg xmlns='http://www.w3.org/2000/svg' width='7' height='4'%3E%3Cpath d='M0 0h7L3.500 4z'/%3E%3C/svg%3E") no-repeat right 5px center,
      url("data:image/svg+xml,%3Csvg xmlns='http://www.w3.org/2000/svg' width='125' height='16'%3E%3Cpath d='M.5.500h124v15H.5z' fill='none' stroke='%23000' stroke-dasharray='1 1'/%3E%3C/svg%3E") no-repeat 2px center,
      linear-gradient(#f3f3f3 48%, #dedede 52%, #d2d2d2);
  }
  .short { margin: 0 3px; }
  .scope { display: flex; align-items: center; padding: 12px 11px 18px 13px; }
  .lines { display: grid; gap: 6px; }
  .lines label { height: 20px; }
  .range { margin-left: 30px; }
  .range span { width: 40px; }
  .range input { width: 29px; }
  .scale { margin-left: 24px; gap: 6px; }
  .scale input { width: 39px; }
  .cfg { margin-left: auto; }
  .view { display: flex; gap: 9px; padding: 18px 3px; }
  .view label { height: 16px; }
  .tabs { display: flex; align-items: flex-end; margin-top: 41px; position: relative; }
  .tabs button { display: flex; align-items: center; gap: 5px; height: 20px; padding: 0 3px 0 5px; border: 1px solid #898c95; border-bottom: 0; margin-right: -1px; background: linear-gradient(#f2f2f2 45%, #dddddd 55%, #cfcfcf); }
  .tabs .active { height: 22px; margin-bottom: -1px; padding: 0 6px; background: #fff; z-index: 1; }
  .panel { border: 1px solid #898c95; padding: 1px 1px 2px; box-shadow: inset 3px 0 #fff, inset -1px -2px #fff, inset 0 1px #fff; }
  .opt { height: 22px; padding-left: 104px; }
  .opt.sub { padding-left: 119px; }
  .opt.deep { padding-left: 134px; }
  .opt.dxf { padding-left: 3px; margin-top: 13px; }

  .notes { position: absolute; left: 0; top: 0; pointer-events: none; }
</style>
